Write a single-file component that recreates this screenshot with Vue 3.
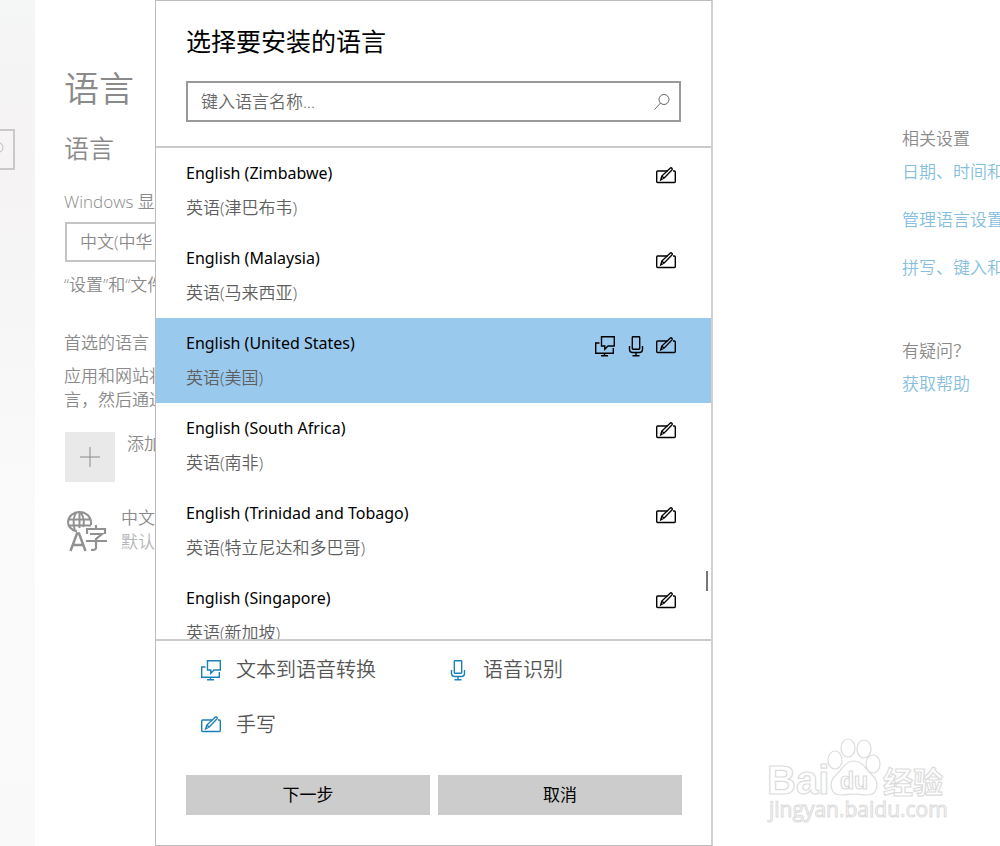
<script setup>
import { ref } from 'vue'

const languages = [
  { name: 'English (Zimbabwe)', local: '英语(津巴布韦)' },
  { name: 'English (Malaysia)', local: '英语(马来西亚)' },
  { name: 'English (United States)', local: '英语(美国)', full: true },
  { name: 'English (South Africa)', local: '英语(南非)' },
  { name: 'English (Trinidad and Tobago)', local: '英语(特立尼达和多巴哥)' },
  { name: 'English (Singapore)', local: '英语(新加坡)' },
]
const selected = ref(2)
const query = ref('')
</script>

<template>
  <div class="page">
    <svg class="defs" width="0" height="0" aria-hidden="true">
      <symbol id="i-write" viewBox="0 0 20 20">
        <path d="M11.500 5H1.600q-.9 0-.9.900v9.700q0 .9.900.900h16.800q.9 0 .9-.9V5.900q0-.9-.9-.9h-1.400" />
        <path d="M4.800 13.800l1-3.700 8.300-7.900q.9-.8 1.800 0 .8.900 0 1.800l-7.700 8zM6 10.200l2.200 2" />
      </symbol>
      <symbol id="i-speech" viewBox="0 0 22 22">
        <path d="M7.500 1.700h12.800v9.300h-6.300l-3.200 3.200V11H7.500z" />
        <path d="M5.500 8H1.700v10.300h17.600V13M10.500 18.300v2.500M7 20.800h7" />
      </symbol>
      <symbol id="i-mic" viewBox="0 0 16 22">
        <path d="M5 1.700h6q.7 0 .7.700v11.200q0 .7-.7.700H5q-.7 0-.7-.7V2.400q0-.7.7-.7z" />
        <path d="M1.500 11v3.500q0 3 3 3h7q3 0 3-3V11M8 17.500v3.300M4.500 20.800h7" />
      </symbol>
      <symbol id="i-search" viewBox="0 0 18 18">
        <circle cx="11" cy="6.500" r="5" />
        <path d="M7.500 10L1.500 16.500" />
      </symbol>
    </svg>

    <nav class="side">
      <label class="side-search">
        <input type="text" aria-label="查找设置" />
        <svg><use href="#i-search" /></svg>
      </label>
    </nav>

    <main class="settings">
      <h1>语言</h1>
      <h2>语言</h2>
      <label class="caption" for="display">Windows 显</label>
      <select id="display"><option>中文(中华</option></select>
      <p class="hint">“设置”和“文件</p>
      <h3>首选的语言</h3>
      <p class="about">应用和网站将<br />言，然后通过</p>
      <button class="add" type="button">
        <span class="plus"><svg viewBox="0 0 20 20"><path d="M10 0v20M0 10h20" /></svg></span>
        <span>添加</span>
      </button>
      <div class="installed">
        <svg class="globe" viewBox="0 0 42 42" aria-hidden="true">
          <g fill="none" stroke="#919191" stroke-width="2">
            <path d="M12 21.500C6 20 3 16 3 12.500A11.500 10.500 0 0 1 26 12.500V15M3 9.500h22M3 15.500h23M10 21C8 15 8 7 11 3M18 17C20 11 18 6 16 3M14.500 2v16" />
            <path d="M5.500 41L12 23.500h2L20.500 41M8 35h10" stroke-width="2.500" />
            <path d="M22 24v-5h18v5M31 15v4M25 24h12l-6 5v9q0 2-5 2M21 31h21" stroke-width="2.200" />
          </g>
        </svg>
        <div class="names"><span>中文</span><small>默认</small></div>
      </div>
    </main>

    <aside class="related">
      <h3>相关设置</h3>
      <a href="#">日期、时间和</a>
      <a href="#">管理语言设置</a>
      <a href="#">拼写、键入和</a>
      <h3 class="ask">有疑问？</h3>
      <a href="#">获取帮助</a>
    </aside>

    <section class="dialog" role="dialog" aria-labelledby="title">
      <header>
        <h2 id="title">选择要安装的语言</h2>
        <label class="search">
          <input v-model="query" type="text" placeholder="键入语言名称..." aria-label="键入语言名称" />
          <svg><use href="#i-search" /></svg>
        </label>
      </header>
      <div class="list">
        <button
          v-for="(l, i) in languages"
          :key="l.name"
          type="button"
          class="row"
          :class="{ on: i === selected }"
          @click="selected = i"
        >
          <span class="text">
            <span class="name">{{ l.name }}</span>
            <span class="local">{{ l.local }}</span>
          </span>
          <span class="icons">
            <svg v-if="l.full" class="speech"><use href="#i-speech" /></svg>
            <svg v-if="l.full" class="mic"><use href="#i-mic" /></svg>
            <svg class="write"><use href="#i-write" /></svg>
          </span>
        </button>
        <span class="thumb"></span>
      </div>
      <footer>
        <div class="legend">
          <span><svg class="speech"><use href="#i-speech" /></svg>文本到语音转换</span>
          <span><svg class="mic"><use href="#i-mic" /></svg>语音识别</span>
          <span><svg class="write"><use href="#i-write" /></svg>手写</span>
        </div>
        <div class="actions">
          <button type="button">下一步</button>
          <button type="button">取消</button>
        </div>
      </footer>
    </section>

    <svg class="mark" viewBox="0 0 190 96" aria-label="Baidu 经验">
      <g fill="#fff" stroke="#dcdcdc" stroke-width="1.200">
        <ellipse cx="72" cy="24" rx="7" ry="9" />
        <ellipse cx="85" cy="12" rx="7" ry="9" />
        <ellipse cx="101" cy="13" rx="7" ry="9" />
        <ellipse cx="110" cy="28" rx="7" ry="9" />
        <path d="M91 25c9 0 12 9 18 14 8 7 6 20-5 20-6 0-8-1-13-1s-7 1-13 1c-11 0-13-13-5-20 6-5 9-14 18-14z" />
        <g class="brand">
          <text x="4" y="58" font-size="40">Bai</text>
          <text x="77" y="53" font-size="23">du</text>
          <text x="120" y="57" font-size="30">经验</text>
        </g>
        <text class="url" x="6" y="81" font-size="21" stroke-width="1">jingyan.baidu.com</text>
      </g>
    </svg>
  </div>
</template>

<style>
body {
  margin: 0;
  background: #fff;
}
</style>

<style scoped>
.page {
  position: relative;
  display: grid;
  grid-template-columns: 35px 1fr 98px;
  height: 100vh;
  overflow: hidden;
  font-family: 'Open Sans', 'Noto Sans CJK SC', sans-serif;
  font-size: 17px;
  font-weight: 350;
  line-height: 24px;
  color: #8a8a8a;
  white-space: nowrap;
}
* {
  box-sizing: border-box;
}
.defs {
  position: absolute;
}
svg {
  fill: none;
  stroke: currentColor;
  flex: none;
}
h1, h2, h3, p {
  margin: 0;
  font-weight: 350;
}
h3 {
  font-size: 17px;
}
button, input, select {
  font: inherit;
  color: inherit;
  border: 0;
  border-radius: 0;
  background: none;
  padding: 0;
  margin: 0;
  outline: 0;
}
.side {
  display: flex;
  justify-content: flex-end;
  align-items: flex-start;
  padding: 129px 20px 0 0;
  overflow: hidden;
  background: linear-gradient(#f5f6f6, #f6f3f4 20%, #f6f6f6 35%, #fafafa 60%, #f9f9f9);
}
.side-search {
  display: flex;
  align-items: center;
  flex: none;
  width: 280px;
  height: 41px;
  padding-right: 8px;
  border: 2px solid #cbc8c9;
  color: #bbb;
}
.side-search input {
  flex: 1;
}
.side-search svg, .search svg {
  width: 18px;
  height: 18px;
}
.settings {
  padding: 65px 0 0 29px;
}
h1 {
  font-size: 35px;
  line-height: 48px;
}
.settings h2 {
  margin-top: 18px;
  font-size: 25px;
  line-height: 34px;
}
.caption {
  display: block;
  margin-top: 25px;
}
select {
  display: block;
  appearance: none;
  width: 280px;
  height: 40px;
  margin: 8px 0 0 1px;
  padding: 0 13px;
  border: 2px solid #c4c4c4;
}
.hint {
  margin-top: 11px;
}
.settings h3 {
  margin-top: 34px;
}
.about {
  margin-top: 9px;
}
.add {
  display: flex;
  gap: 12px;
  margin: 20px 0 0 1px;
  align-items: flex-start;
}
.plus {
  display: grid;
  place-items: center;
  width: 50px;
  height: 50px;
  background: #e9e9e9;
}
.plus svg {
  width: 20px;
  height: 20px;
}
.installed {
  display: flex;
  gap: 14px;
  margin: 24px 0 0 1px;
}
.globe {
  width: 42px;
  height: 50px;
}
.names {
  display: grid;
  align-content: start;
}
.names small {
  font-size: 17px;
  color: #b5b5b5;
}
.related {
  display: flex;
  flex-direction: column;
  align-items: flex-start;
  padding-top: 127px;
}
.related a {
  margin-bottom: 24px;
  color: #86bfde;
  text-decoration: none;
}
.related h3 {
  margin-bottom: 9px;
}
.related .ask {
  margin-top: 35px;
}
.dialog {
  position: absolute;
  top: 0;
  bottom: 0;
  left: 155px;
  right: 287px;
  display: flex;
  flex-direction: column;
  background: #fff;
  border: 1px solid #bdbdbd;
  border-right: 2px solid #d0d0d0;
  color: #000;
}
header {
  padding: 22px 30px 24px;
  border-bottom: 2px solid #cbcbcb;
}
header h2 {
  font-size: 25px;
  line-height: 36px;
  font-weight: 400;
}
.search {
  display: flex;
  align-items: center;
  height: 41px;
  margin-top: 22px;
  padding: 0 8px 0 13px;
  border: 2px solid #999;
  color: #666;
}
.search input {
  flex: 1;
  min-width: 0;
}
.search input::placeholder {
  color: #666;
  opacity: 1;
}
.list {
  position: relative;
  flex: 1;
  min-height: 0;
  overflow: hidden;
}
.row {
  display: flex;
  justify-content: space-between;
  align-items: flex-start;
  width: 100%;
  height: 85px;
  padding: 12px 35px 0 30px;
  text-align: left;
  line-height: 26px;
}
.row.on {
  background: #9ac9ee;
}
.text {
  display: grid;
  gap: 9px;
}
.name {
  font-family: 'Noto Sans', sans-serif;
  font-size: 16px;
  font-weight: 400;
}
.local {
  color: #5e5e5e;
}
.icons {
  display: flex;
  align-items: center;
  gap: 12px;
  height: 32px;
}
.icons svg {
  stroke-width: 1.4;
}
.write {
  width: 20px;
  height: 20px;
}
.speech {
  width: 22px;
  height: 22px;
}
.mic {
  width: 16px;
  height: 22px;
}
.thumb {
  position: absolute;
  right: 3px;
  top: 423px;
  width: 2px;
  height: 20px;
  background: #777;
}
footer {
  padding: 11px 29px 30px 30px;
  border-top: 2px solid #cbcbcb;
}
.legend {
  display: grid;
  grid-template-columns: 1fr 1fr;
  gap: 19px 12px;
  padding-left: 14px;
  font-size: 20px;
  line-height: 36px;
  color: #555;
}
.legend span {
  display: flex;
  align-items: center;
  gap: 14px;
}
.legend svg {
  width: 22px;
  color: #1a80b8;
  stroke-width: 1.4;
}
.actions {
  display: grid;
  grid-template-columns: 1fr 1fr;
  gap: 8px;
  margin-top: 32px;
}
.actions button {
  height: 40px;
  background: #ccc;
  font-weight: 400;
}
.mark {
  position: absolute;
  right: 47px;
  bottom: 14px;
  width: 190px;
  height: 96px;
}
.brand {
  font-family: 'Liberation Sans', 'Noto Sans CJK SC', sans-serif;
  font-weight: 700;
}
.url {
  font-family: 'Open Sans', sans-serif;
  font-weight: 400;
}
</style>
